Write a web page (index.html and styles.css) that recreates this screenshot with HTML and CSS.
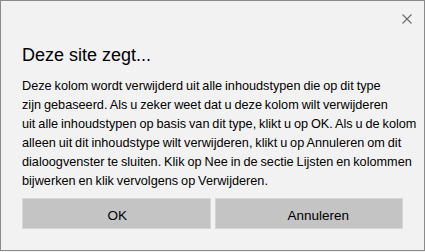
FILE: index.html
```html
<!DOCTYPE html>
<html lang="nl">
<head>
<meta charset="utf-8">
<title>Deze site zegt...</title>
<link rel="stylesheet" href="styles.css">
</head>
<body>
<div class="dialog">
  <div class="top">
    <button class="close" aria-label="Sluiten">
      <svg width="10" height="10" viewBox="0 0 10 10"><path d="M0.5 0.5 L9.5 9.5 M9.5 0.5 L0.5 9.5" stroke="#6b6b6b" stroke-width="1.1" fill="none"/></svg>
    </button>
  </div>
  <h1 class="title">Deze site zegt...</h1>
  <p class="message">Deze kolom wordt verwijderd uit alle inhoudstypen die op dit type<br>zijn gebaseerd. Als u zeker weet dat u deze kolom wilt verwijderen<br>uit alle inhoudstypen op basis van dit type, klikt u op OK. Als u de kolom<br>alleen uit dit inhoudstype wilt verwijderen, klikt u op Annuleren om dit<br>dialoogvenster te sluiten. Klik op Nee in de sectie Lijsten en kolommen<br>bijwerken en klik vervolgens op Verwijderen.</p>
  <div class="buttons">
    <button class="btn btn-ok">OK</button>
    <button class="btn btn-cancel">Annuleren</button>
  </div>
</div>
</body>
</html>
```
FILE: styles.css
```css
html, body {
  margin: 0;
  padding: 0;
  background: #f2f2f2;
}
.dialog {
  box-sizing: border-box;
  width: 425px;
  height: 251px;
  border: 1px solid #8a8a8a;
  background: #f2f2f2;
  padding: 0 21px;
  font-family: "Liberation Sans", Arial, sans-serif;
  color: #000;
}
.top {
  display: flex;
  justify-content: flex-end;
  margin-right: -9px;
  padding-top: 13px;
}
.close {
  border: 0;
  background: none;
  padding: 0;
  width: 10px;
  height: 10px;
  display: block;
}
.close svg { display: block; }
.title {
  margin: 19px 0 0;
  font-size: 18px;
  font-weight: normal;
  line-height: 24px;
}
.message {
  margin: 10px 0 0;
  font-size: 12.7px;
  word-spacing: -0.6px;
  line-height: 19px;
  white-space: nowrap;
}
.buttons {
  display: grid;
  grid-template-columns: 1fr 1fr;
  gap: 4px;
  margin-top: 7px;
}
.btn {
  box-sizing: border-box;
  height: 31px;
  background: #c4c4c4;
  border: 1px solid #d6d6d6;
  font-family: "Liberation Sans", Arial, sans-serif;
  font-size: 13.5px;
  color: #000;
  padding: 3px 0 0;
}
.btn-ok {
  padding-left: 2px;
}
.btn-cancel {
  padding-left: 19px;
}
```
